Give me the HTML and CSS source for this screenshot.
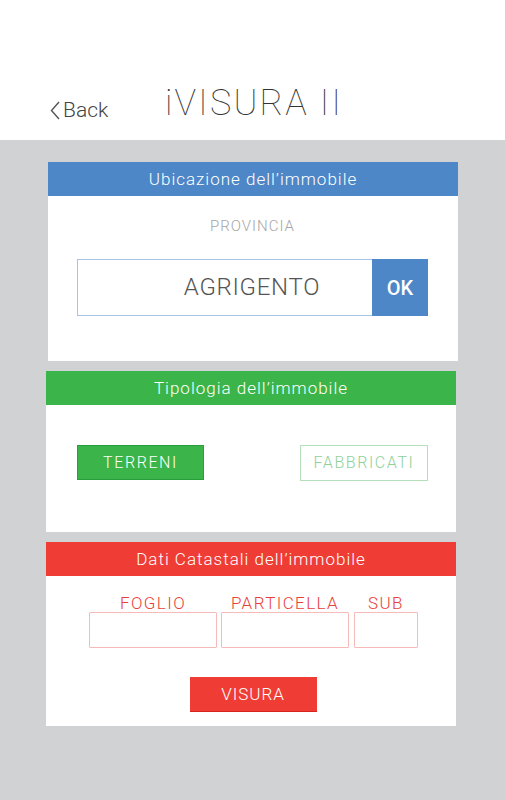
FILE: index.html
```html
<!DOCTYPE html>
<html lang="it">
<head>
    <meta charset="UTF-8">
    <meta name="viewport" content="width=device-width, initial-scale=1.0">
    <title>iVISURA II</title>
    <link rel="stylesheet" href="styles.css">
</head>
<body>
    <div class="topbar">
        <a class="back" href="#">
            <svg class="back-icon" width="10" height="19" viewBox="0 0 10 19">
                <path d="M9 1 L1.5 9.5 L9 18" fill="none" stroke="#555" stroke-width="1.4"/>
            </svg>
            Back
        </a>
        <h1 class="app-title">iVISURA II</h1>
    </div>

    <div class="content">
        <div class="card card-blue card-first">
            <div class="card-head">Ubicazione dell&rsquo;immobile</div>
            <div class="card-body provincia-body">
                <p class="provincia-label">PROVINCIA</p>
                <div class="search-row">
                    <div class="search-field">AGRIGENTO</div>
                    <button class="ok-btn">OK</button>
                </div>
            </div>
        </div>

        <div class="card card-green">
            <div class="card-head">Tipologia dell&rsquo;immobile</div>
            <div class="card-body tipo-body">
                <button class="tipo-btn active">TERRENI</button>
                <button class="tipo-btn">FABBRICATI</button>
            </div>
        </div>

        <div class="card card-red">
            <div class="card-head">Dati Catastali dell&rsquo;immobile</div>
            <div class="card-body dati-body">
                <div class="fields">
                    <div class="field field-foglio">
                        <label>FOGLIO</label>
                        <div class="field-box"></div>
                    </div>
                    <div class="field field-particella">
                        <label>PARTICELLA</label>
                        <div class="field-box"></div>
                    </div>
                    <div class="field field-sub">
                        <label>SUB</label>
                        <div class="field-box"></div>
                    </div>
                </div>
                <button class="visura-btn">VISURA</button>
            </div>
        </div>
    </div>
</body>
</html>
```

FILE: styles.css
```css
* {
    box-sizing: border-box;
    margin: 0;
    padding: 0;
}

body {
    font-family: Roboto, "Liberation Sans", sans-serif;
    background: #d1d2d4;
    min-height: 800px;
}

.topbar {
    height: 140px;
    background: white;
    display: flex;
    align-items: flex-end;
    padding: 0 0 17px 50px;
}

.back {
    display: flex;
    align-items: center;
    gap: 3px;
    color: #444;
    text-decoration: none;
    font-size: 21px;
    font-weight: 300;
    width: 115px;
    padding-bottom: 1px;
}

.app-title {
    font-size: 36px;
    font-weight: 100;
    letter-spacing: 2.2px;
    color: #333;
    line-height: 40px;
}

.content {
    padding: 22px 49px 0 46px;
}

.card {
    background: white;
    margin-bottom: 10px;
}

.card-first {
    margin-left: 2px;
    margin-right: -2px;
}

.card-head {
    height: 34px;
    line-height: 34px;
    text-align: center;
    color: white;
    font-size: 17px;
    font-weight: 300;
    letter-spacing: 1px;
}

.card-blue .card-head { background: #4d87c7; }
.card-green .card-head { background: #3bb54a; }
.card-red .card-head { background: #ef3d36; }

.provincia-body {
    height: 165px;
    padding: 21px 30px 0 29px;
}

.provincia-label {
    text-align: center;
    color: #a6a6a6;
    font-size: 15px;
    font-weight: 300;
    letter-spacing: 1px;
    height: 42px;
}

.search-row {
    display: flex;
    height: 57px;
}

.search-field {
    flex: 1;
    border: 1px solid #a9c3e4;
    border-right: none;
    padding-left: 54px;
    text-align: center;
    line-height: 55px;
    font-size: 24px;
    font-weight: 300;
    letter-spacing: 0.7px;
    color: #555;
}

.ok-btn {
    width: 56px;
    border: none;
    background: #4d87c7;
    color: white;
    font-family: inherit;
    font-size: 20px;
    font-weight: 500;
}

.tipo-body {
    height: 127px;
    display: flex;
    justify-content: space-between;
    align-items: center;
    padding: 0 28px 12px 31px;
}

.tipo-btn {
    width: 128px;
    height: 36px;
    background: white;
    border: 1px solid #b4e0ba;
    color: #8fd19a;
    font-family: inherit;
    font-size: 16px;
    font-weight: 300;
    letter-spacing: 1.6px;
}

.tipo-btn.active {
    width: 127px;
    height: 35px;
    background: #3bb54a;
    border-color: #2a9e3a;
    color: white;
}

.dati-body {
    height: 150px;
    display: flex;
    flex-direction: column;
    align-items: center;
    padding-top: 18px;
}

.fields {
    display: flex;
    gap: 4px;
    margin-left: 5px;
}

.field {
    display: flex;
    flex-direction: column;
    align-items: center;
}

.field label {
    color: #e8403a;
    font-size: 17px;
    font-weight: 300;
    letter-spacing: 1.4px;
    line-height: 18px;
}

.field-box {
    height: 36px;
    border: 1px solid #f6bbb8;
    border-radius: 1px;
}

.field-foglio .field-box { width: 128px; }
.field-particella .field-box { width: 128px; }
.field-sub { margin-left: 1px; }
.field-sub .field-box { width: 64px; }

.visura-btn {
    margin-top: 29px;
    margin-left: 4px;
    width: 127px;
    height: 35px;
    background: #ef3d36;
    border: none;
    border-bottom: 1px solid #d8241d;
    color: white;
    font-family: inherit;
    font-size: 17px;
    font-weight: 300;
    letter-spacing: 1px;
}
```
